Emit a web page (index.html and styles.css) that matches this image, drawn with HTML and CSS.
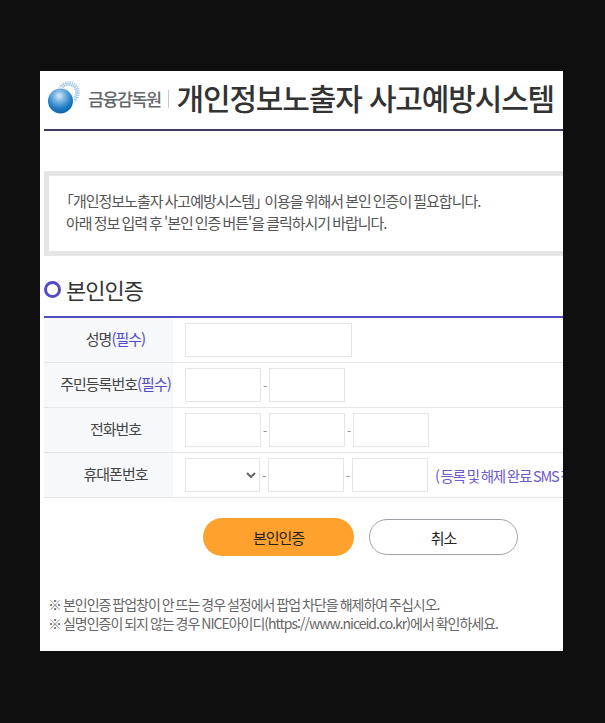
FILE: index.html
```html
<!DOCTYPE html>
<html lang="ko">
<head>
<meta charset="utf-8">
<title>개인정보노출자 사고예방시스템</title>
<link rel="stylesheet" href="styles.css">
</head>
<body>
<main class="panel">
  <div class="inner">
    <header class="header">
      <svg class="logo" width="34" height="34" viewBox="0 0 34 34" aria-hidden="true">
        <defs>
          <radialGradient id="ball" cx="0.45" cy="0.3" r="0.72">
            <stop offset="0" stop-color="#dcebf6"/>
            <stop offset="0.3" stop-color="#7cb6e2"/>
            <stop offset="0.7" stop-color="#1f7cc4"/>
            <stop offset="1" stop-color="#0f62ab"/>
          </radialGradient>
        </defs>
        <circle class="logo-halo" cx="21.5" cy="12.5" r="8.4" pathLength="60"/>
        <circle class="logo-halo-outer" cx="21.5" cy="12.5" r="10.8" pathLength="90"/>
        <circle class="logo-gap" cx="13.5" cy="21" r="13.5"/>
        <circle cx="13.5" cy="21" r="12.5" fill="url(#ball)"/>
      </svg>
      <span class="org">금융감독원</span>
      <span class="divider"></span>
      <h1 class="site-title">개인정보노출자 사고예방시스템</h1>
    </header>

    <section class="notice">
      <p><span class="bracket-open">「</span>개인정보노출자 사고예방시스템<span class="bracket-close">」</span> 이용을 위해서 본인 인증이 필요합니다.</p>
      <p>아래 정보 입력 후 '본인 인증 버튼'을 클릭하시기 바랍니다.</p>
    </section>

    <h2 class="section-title"><span class="ring"></span>본인인증</h2>

    <table class="form-table">
      <tr>
        <th>성명<em>(필수)</em></th>
        <td><div class="fields"><input class="field field-name" type="text"></div></td>
      </tr>
      <tr>
        <th>주민등록번호<em>(필수)</em></th>
        <td><div class="fields"><input class="field" type="text"><span class="dash">-</span><input class="field" type="text"></div></td>
      </tr>
      <tr>
        <th>전화번호</th>
        <td><div class="fields"><input class="field" type="text"><span class="dash">-</span><input class="field" type="text"><span class="dash">-</span><input class="field" type="text"></div></td>
      </tr>
      <tr>
        <th>휴대폰번호</th>
        <td><div class="fields"><select class="field field-select"><option></option></select><span class="dash">-</span><input class="field" type="text"><span class="dash">-</span><input class="field" type="text"><span class="hint">( 등록 및 해제 완료 SMS 전송)</span></div></td>
      </tr>
    </table>

    <div class="actions">
      <button class="btn btn-primary" type="button">본인인증</button>
      <button class="btn btn-cancel" type="button">취소</button>
    </div>

    <div class="notes">
      <p>※ 본인인증 팝업창이 안 뜨는 경우 설정에서 팝업 차단을 해제하여 주십시오.</p>
      <p>※ 실명인증이 되지 않는 경우 NICE아이디(https://www.niceid.co.kr)에서 확인하세요.</p>
    </div>
  </div>
</main>
</body>
</html>
```
FILE: styles.css
```css
* { box-sizing: border-box; }
html, body { margin: 0; height: 100%; }
body {
  background: #0f0f0f;
  padding: 71px 0 0 40px;
  overflow: hidden;
  font-family: "Noto Sans CJK KR", "Noto Sans", sans-serif;
  color: #444;
}
.panel {
  width: 523px;
  height: 580px;
  background: #fff;
  overflow: hidden;
}
.inner {
  width: 760px;
  padding-left: 4px;
}
.header {
  display: flex;
  align-items: center;
  height: 60px;
  border-bottom: 2px solid #3f3b63;
  padding: 0 0 6px 3px;
}
.logo { flex: none; }
.logo-halo, .logo-halo-outer { fill: none; }
.logo-halo {
  stroke: #9cc3e3;
  stroke-width: 3.6;
  stroke-dasharray: 1.4 0.9;
}
.logo-halo-outer {
  stroke: #bcd6ec;
  stroke-width: 1.6;
  stroke-dasharray: 1.8 1.2;
}
.logo-gap { fill: #fff; }
.org {
  margin-left: 7px;
  margin-top: 3px;
  font-size: 17.5px;
  font-weight: 500;
  letter-spacing: -1.6px;
  color: #63676a;
}
.divider {
  width: 1px;
  height: 18px;
  background: #c9c9c9;
  margin: 3px 8px 0 7px;
}
.site-title {
  margin: 0;
  font-size: 30px;
  font-weight: 500;
  letter-spacing: -1.15px;
  color: #333;
  line-height: 40px;
}
.notice {
  margin-top: 40px;
  height: 85px;
  border: 5px solid #e5e5e5;
  padding: 14px 0 0 17px;
  font-size: 15px;
  letter-spacing: -1.02px;
  word-spacing: -1.05px;
  line-height: 22px;
  color: #555;
}
.notice p, .notes p { margin: 0; }
.bracket-open { margin-left: -7px; }
.bracket-close { letter-spacing: -7px; }
.section-title {
  display: flex;
  align-items: center;
  gap: 5px;
  margin: 18px 0 0;
  height: 29px;
  font-size: 22px;
  font-weight: 400;
  letter-spacing: -1px;
  color: #333;
}
.ring {
  width: 17px;
  height: 17px;
  margin-top: 2px;
  border: 3px solid #524bc4;
  border-radius: 50%;
}
.form-table {
  width: 100%;
  margin-top: 13px;
  border-collapse: collapse;
  border-top: 2px solid #524bc4;
}
.form-table tr { border-bottom: 1px solid #e5e5e5; }
.form-table th {
  width: 129px;
  height: 44px;
  padding: 0 0 3px 14px;
  background: #f6f8fa;
  font-size: 15px;
  font-weight: 400;
  letter-spacing: -1px;
  color: #444;
  text-align: center;
  white-space: nowrap;
}
.form-table th em {
  font-style: normal;
  color: #524bc4;
}
.form-table td { padding: 0 0 0 12px; }
.fields {
  display: flex;
  align-items: center;
  height: 44px;
}
.field {
  width: 76px;
  height: 34px;
  margin: 0;
  padding: 0 8px;
  border: 1px solid #e5e5e5;
  border-radius: 0;
  background: #fff;
  outline: none;
}
.field-name { width: 167px; }
.field-select { width: 75px; color: #666; }
.dash {
  width: 8px;
  font-size: 12px;
  color: #888;
  text-align: center;
}
.hint {
  margin-left: 7px;
  font-size: 14.5px;
  letter-spacing: -1.2px;
  word-spacing: -1px;
  color: #6a5acd;
  white-space: nowrap;
}
.actions {
  display: flex;
  align-items: center;
  gap: 15px;
  margin: 20px 0 0 159px;
}
.btn {
  font-family: inherit;
  font-size: 15px;
  letter-spacing: -1px;
  color: #222;
  padding: 0;
  border-radius: 19px;
}
.btn-primary {
  width: 151px;
  height: 38px;
  background: #ffa12d;
  border: 0;
}
.btn-cancel {
  width: 149px;
  height: 36px;
  background: #fff;
  border: 1px solid #a0a0a8;
}
.notes {
  margin: 39px 0 0 4px;
  font-size: 14px;
  letter-spacing: -1px;
  word-spacing: -1px;
  line-height: 19px;
  color: #666;
}
```
